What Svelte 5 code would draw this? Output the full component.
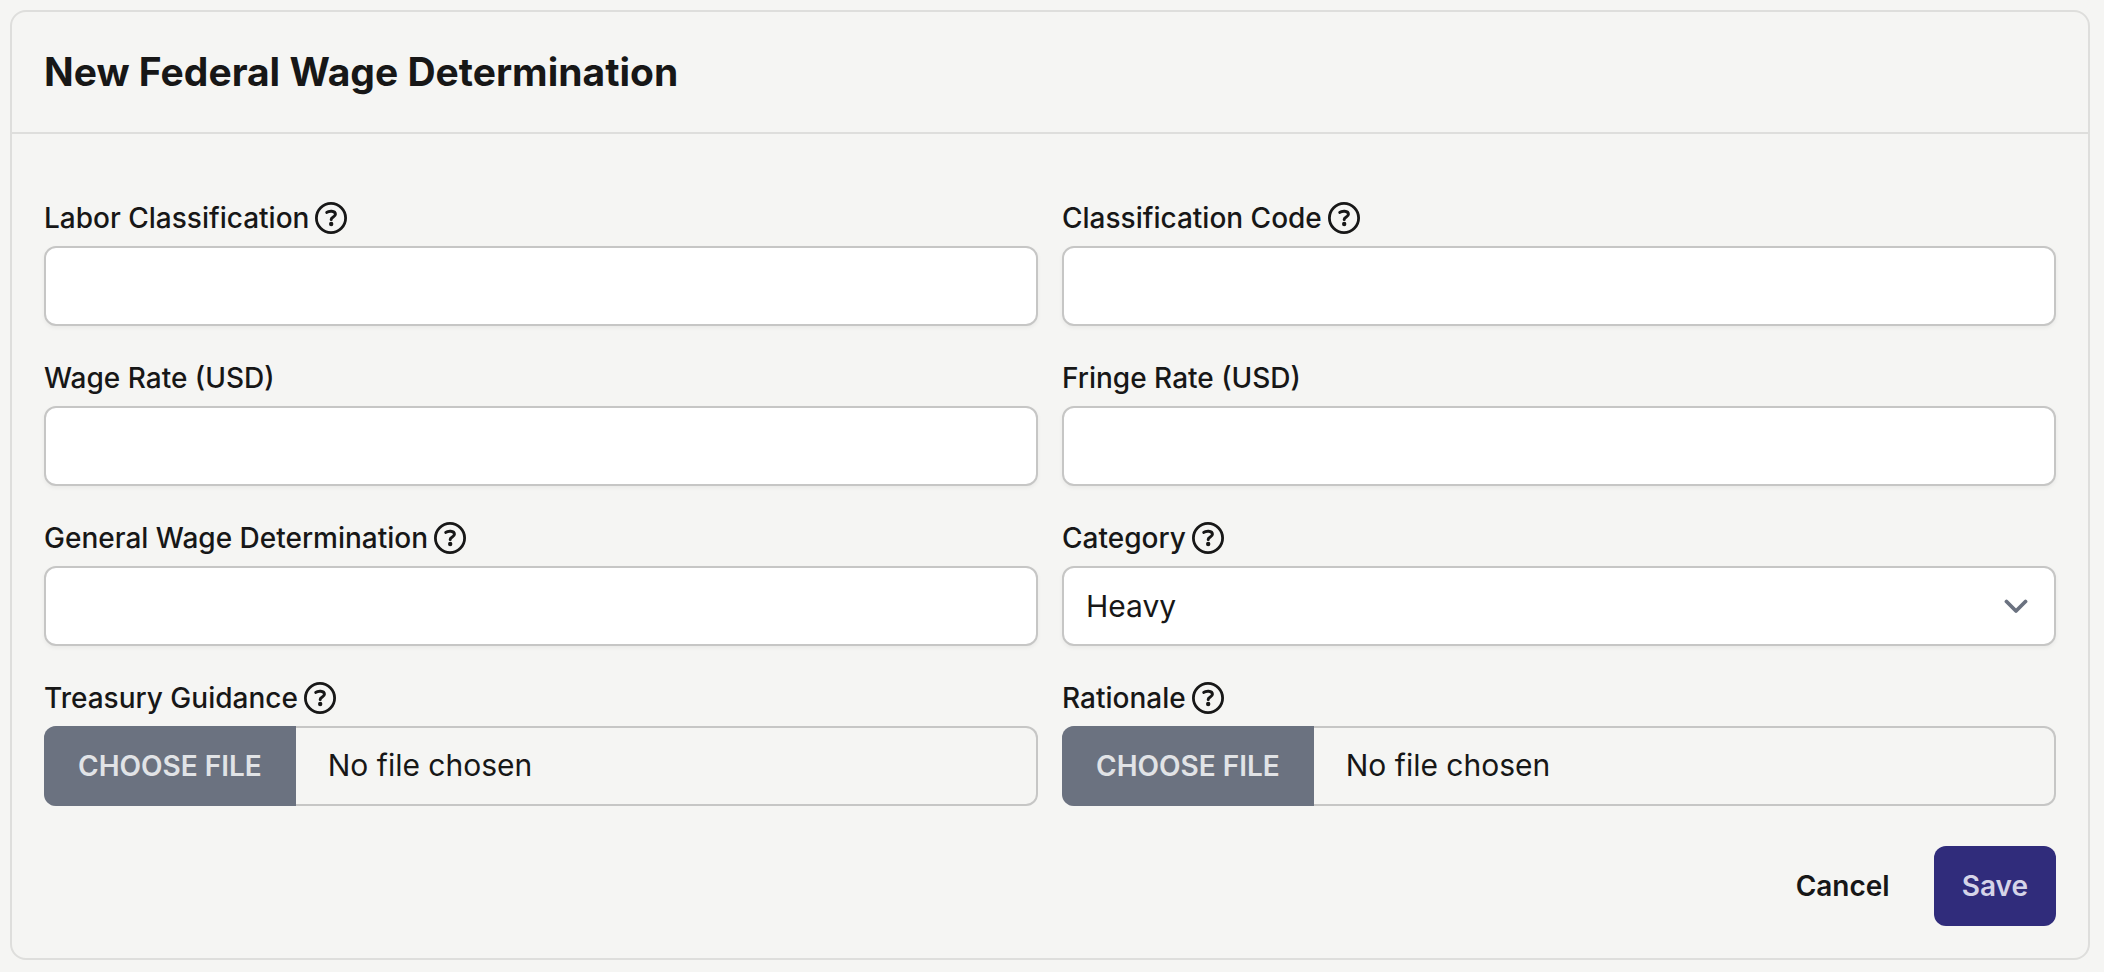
<script lang="ts">
  type Field = {
    id: string;
    label: string;
    kind: 'text' | 'select' | 'file';
    help?: string;
  };

  const fields: Field[] = [
    { id: 'labor-classification', label: 'Labor Classification', kind: 'text', help: 'About labor classification' },
    { id: 'classification-code', label: 'Classification Code', kind: 'text', help: 'About classification code' },
    { id: 'wage-rate', label: 'Wage Rate (USD)', kind: 'text' },
    { id: 'fringe-rate', label: 'Fringe Rate (USD)', kind: 'text' },
    { id: 'general-wage', label: 'General Wage Determination', kind: 'text', help: 'About general wage determination' },
    { id: 'category', label: 'Category', kind: 'select', help: 'About category' },
    { id: 'treasury-guidance', label: 'Treasury Guidance', kind: 'file', help: 'About treasury guidance' },
    { id: 'rationale', label: 'Rationale', kind: 'file', help: 'About rationale' }
  ];

  const categories = ['Heavy', 'Highway', 'Building', 'Residential'];

  let values = $state<Record<string, string>>({});
  let category = $state('Heavy');

  function submit(e: Event) {
    e.preventDefault();
  }
</script>

<main class="page">
  <section class="card">
    <header>
      <h1>New Federal Wage Determination</h1>
    </header>

    <form onsubmit={submit}>
      <div class="grid">
        {#each fields as field (field.id)}
          <div class="field">
            <div class="label-row">
              <label for={field.id}>{field.label}</label>
              {#if field.help}
                <button type="button" class="help" aria-label={field.help}>
                  <svg viewBox="0 0 32 32" width="32" height="32" fill="none" stroke="currentColor" stroke-linecap="round" stroke-linejoin="round">
                    <circle cx="16" cy="16" r="14.6" stroke-width="2.8" />
                    <path d="M11.8 10.4C13.4 9 20.4 8 20.4 12.3C20.4 15 16.2 15 16.2 17.6" stroke-width="3" />
                    <circle cx="16.2" cy="22" r="2.2" fill="currentColor" stroke="none" />
                  </svg>
                </button>
              {/if}
            </div>

            {#if field.kind === 'select'}
              <div class="select-wrap">
                <select id={field.id} class="control" bind:value={category}>
                  {#each categories as option}
                    <option>{option}</option>
                  {/each}
                </select>
                <svg class="chevron" viewBox="0 0 24 24" width="24" height="24" fill="none" stroke="currentColor" stroke-width="3.8" stroke-linecap="round" stroke-linejoin="round"><path d="M2.5 7.5L12 17l9.5-9.5" /></svg>
              </div>
            {:else if field.kind === 'file'}
              <input id={field.id} class="file" type="file" />
            {:else}
              <input id={field.id} class="control" type="text" bind:value={values[field.id]} />
            {/if}
          </div>
        {/each}
      </div>

      <div class="actions">
        <button type="button" class="btn">Cancel</button>
        <button type="submit" class="btn primary">Save</button>
      </div>
    </form>
  </section>
</main>

<style>
  :global(body) { margin: 0; background: #f5f5f3; }
  .page { padding: 10px 14px 12px 10px; font-family: Inter, 'Liberation Sans', sans-serif; color: #171717; }
  .page, .page * { box-sizing: border-box; }
  .card { border: 2px solid #dededc; border-radius: 16px; }

  header { padding: 32px; border-bottom: 2px solid #dededc; }
  h1 { margin: 0; font-size: 39px; line-height: 56px; font-weight: 650; }

  form { padding: 64px 32px 32px; }
  .grid { display: grid; grid-template-columns: repeat(2, minmax(0, 1fr)); gap: 32px 24px; }
  .label-row { display: flex; align-items: center; gap: 6px; height: 40px; margin-bottom: 8px; }
  label { font-size: 28px; line-height: 40px; font-weight: 500; }
  .help { display: flex; padding: 0; border: 0; background: none; color: inherit; cursor: pointer; }

  .control { display: block; width: 100%; height: 80px; padding: 0 22px; border: 2px solid #c6c6c5; border-radius: 12px; background: #fff; color: inherit; font-family: inherit; font-size: 30px; box-shadow: 0 2px 4px rgba(0, 0, 0, .05); }
  select.control { appearance: none; padding-right: 80px; }
  .select-wrap { position: relative; }
  .chevron { position: absolute; top: 28px; right: 28px; color: #6b7280; pointer-events: none; }

  /* inset shadow stands in for the border so the picker button covers it */
  .file { display: block; width: 100%; height: 80px; border-radius: 12px; box-shadow: inset 0 0 0 2px #c6c6c5; overflow: hidden; color: inherit; font-family: inherit; font-size: 30px; line-height: 76px; }
  .file::file-selector-button { height: 80px; margin: 0 32px 0 0; padding: 0 34px; border: 0; background: #6b7280; color: #e1e3e6; font-family: inherit; font-size: 28px; font-weight: 600; text-transform: uppercase; cursor: pointer; }

  .actions { display: flex; justify-content: flex-end; gap: 16px; margin-top: 40px; }
  .btn { height: 80px; padding: 0 28px; border: 0; border-radius: 12px; background: none; color: inherit; font-family: inherit; font-size: 28px; font-weight: 600; cursor: pointer; }
  .primary { background: #302c7b; color: #d5d4e8; }
</style>
